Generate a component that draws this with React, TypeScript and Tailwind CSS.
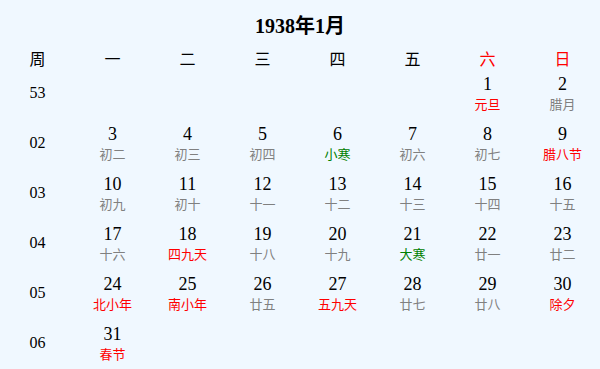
import React from "react";

type Day = { d: number; l: string; c?: "red" | "green" };

const weeks: { w: string; days: (Day | null)[] }[] = [
  { w: "53", days: [null, null, null, null, null, { d: 1, l: "元旦", c: "red" }, { d: 2, l: "腊月" }] },
  {
    w: "02",
    days: [
      { d: 3, l: "初二" },
      { d: 4, l: "初三" },
      { d: 5, l: "初四" },
      { d: 6, l: "小寒", c: "green" },
      { d: 7, l: "初六" },
      { d: 8, l: "初七" },
      { d: 9, l: "腊八节", c: "red" },
    ],
  },
  {
    w: "03",
    days: [
      { d: 10, l: "初九" },
      { d: 11, l: "初十" },
      { d: 12, l: "十一" },
      { d: 13, l: "十二" },
      { d: 14, l: "十三" },
      { d: 15, l: "十四" },
      { d: 16, l: "十五" },
    ],
  },
  {
    w: "04",
    days: [
      { d: 17, l: "十六" },
      { d: 18, l: "四九天", c: "red" },
      { d: 19, l: "十八" },
      { d: 20, l: "十九" },
      { d: 21, l: "大寒", c: "green" },
      { d: 22, l: "廿一" },
      { d: 23, l: "廿二" },
    ],
  },
  {
    w: "05",
    days: [
      { d: 24, l: "北小年", c: "red" },
      { d: 25, l: "南小年", c: "red" },
      { d: 26, l: "廿五" },
      { d: 27, l: "五九天", c: "red" },
      { d: 28, l: "廿七" },
      { d: 29, l: "廿八" },
      { d: 30, l: "除夕", c: "red" },
    ],
  },
  { w: "06", days: [{ d: 31, l: "春节", c: "red" }, null, null, null, null, null, null] },
];

const heads = ["周", "一", "二", "三", "四", "五", "六", "日"];

export default function App() {
  return (
    <div
      className="w-[600px] h-[369px] bg-[#f0f8ff] text-black overflow-hidden"
      style={{ fontFamily: '"Liberation Serif", "Noto Sans CJK SC", serif' }}
    >
      <div className="h-[48px] flex items-center justify-center pt-[2px]">
        <span className="text-[20px] font-bold leading-none">
          1938<span className="font-['Noto_Sans_CJK_SC']">年</span>1<span className="font-['Noto_Sans_CJK_SC']">月</span>
        </span>
      </div>
      <div className="grid grid-cols-8 h-[20px] items-center">
        {heads.map((h, i) => (
          <div
            key={h}
            className={`text-center text-[16px] leading-[20px] font-['Noto_Sans_CJK_SC'] ${i >= 6 ? "text-[#ff0000]" : "text-black"}`}
          >
            {h}
          </div>
        ))}
      </div>
      {weeks.map((wk) => (
        <div key={wk.w} className="grid grid-cols-8 h-[50px] items-center">
          <div className="text-center text-[16px] leading-[20px]">{wk.w}</div>
          {wk.days.map((day, i) =>
            day ? (
              <div key={i} className="flex flex-col items-center">
                <div className="text-[18px] leading-[20px]">{day.d}</div>
                <div
                  className={`mt-[1px] text-[13px] leading-[18px] font-['Noto_Sans_CJK_SC'] ${
                    day.c === "red" ? "text-[#ff0000]" : day.c === "green" ? "text-[#008000]" : "text-[#808080]"
                  }`}
                >
                  {day.l}
                </div>
              </div>
            ) : (
              <div key={i} />
            )
          )}
        </div>
      ))}
    </div>
  );
}
